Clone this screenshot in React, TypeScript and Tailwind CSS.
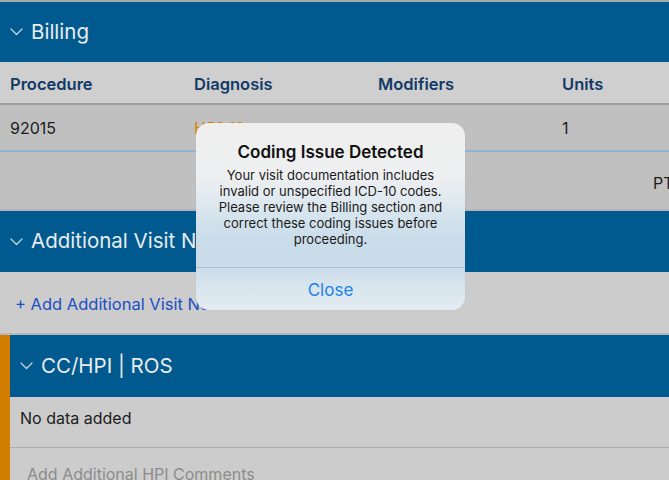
import React from 'react'

function Chevron() {
  return (
    <svg width="13" height="8" viewBox="0 0 13 8" fill="none" className="shrink-0">
      <path d="M1 1l5.5 5.5L12 1" stroke="#c9d7e2" strokeWidth="1.2" strokeLinecap="round" strokeLinejoin="round" />
    </svg>
  )
}

function SectionHeader({ title, height }: { title: string; height: string }) {
  return (
    <div className={`${height} bg-[#005a8f] flex items-center pl-[10px] gap-[8px] whitespace-nowrap overflow-hidden`}>
      <Chevron />
      <span className="text-[20.5px] text-[#e9ecee] leading-none">{title}</span>
    </div>
  )
}

export default function App() {
  return (
    <div
      className="relative w-[669px] h-[480px] overflow-hidden bg-[#cccccc]"
      style={{ fontFamily: 'Inter, "Noto Sans", sans-serif' }}
    >
      <div className="h-[2px] bg-[#a9a9a9]" />

      {/* Billing */}
      <SectionHeader title="Billing" height="h-[60px]" />
      <div className="h-[43px] pt-[3px] bg-[#cfcfcf] grid grid-cols-[184px_184px_184px_1fr] items-center pl-[10px] text-[16.5px] font-semibold text-[#123a66] border-b-2 border-[#9c9c9c]">
        <span>Procedure</span>
        <span>Diagnosis</span>
        <span>Modifiers</span>
        <span>Units</span>
      </div>
      <div className="h-[47px] pt-[1px] bg-[#c0c0c0] grid grid-cols-[184px_184px_184px_1fr] items-center pl-[10px] text-[16px] text-[#1c1c1c] border-b-2 border-[#8fb4cf]">
        <span>92015</span>
        <span className="text-[#dc8300]">H52.13</span>
        <span></span>
        <span>1</span>
      </div>
      <div className="h-[59px] pt-[4px] bg-[#c0c0c0] flex items-center pl-[653px] text-[16px] text-[#1c1c1c] whitespace-nowrap border-b-2 border-[#b4b4b4]">
        <span>PT</span>
      </div>

      {/* Additional Visit Notes */}
      <SectionHeader title="Additional Visit Notes" height="h-[61px]" />
      <div className="h-[63px] pt-[4px] bg-[#cccccc] flex items-center pl-[15px] text-[16.5px] text-[#1b4fc4] border-b-2 border-[#b8b8b8]">
        <span>+ Add Additional Visit Notes</span>
      </div>

      {/* CC/HPI | ROS */}
      <div className="border-l-[10px] border-[#d17d00]">
        <SectionHeader title="CC/HPI | ROS" height="h-[62px]" />
        <div className="h-[51px] bg-[#cccccc] pl-[10px] pt-[9px] text-[16px] leading-[24px] text-[#1c1c1c] border-b border-[#adadad]">
          No data added
        </div>
        <div className="pl-[17px] pt-[14px] text-[16px] leading-[24px] text-[#8c8c8c] whitespace-nowrap">
          Add Additional HPI Comments
        </div>
      </div>

      {/* Alert (frosted panel) */}
      <div className="absolute left-[196px] top-[123px] w-[269px] h-[187px] rounded-[13px] overflow-hidden bg-[linear-gradient(180deg,#efefef_0%,#eeeff0_28%,#e2eaf0_40%,#d2e2ec_52%,#c9dcea_64%,#cadcea_76%,#d6e4ed_86%,#e3ecf1_100%)] shadow-[0_0_1px_rgba(0,0,0,0.15)] flex flex-col text-center">
        <div className="flex-1 px-[16px] pt-[18px]">
          <div className="text-[17px] leading-[22px] font-semibold text-[#111]">Coding Issue Detected</div>
          <div className="mt-[4px] text-[13px] leading-[16px] text-[#1a1a1a]">
            Your visit documentation includes invalid or unspecified ICD-10 codes. Please review the Billing section and correct these coding issues before proceeding.
          </div>
        </div>
        <div className="h-[43px] pt-[3px] border-t border-[#abc2d2] flex items-center justify-center text-[17px] text-[#1a82f0]">
          Close
        </div>
      </div>
    </div>
  )
}
